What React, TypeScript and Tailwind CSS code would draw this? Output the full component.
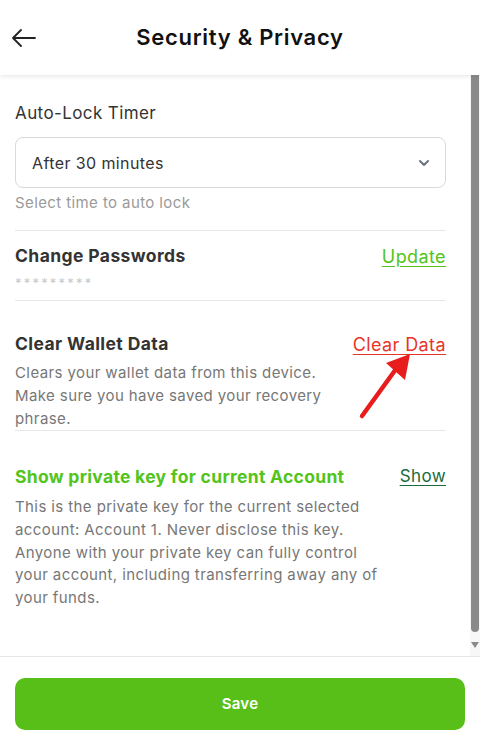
import React from 'react';

const font = { fontFamily: 'Inter, "Noto Sans", sans-serif' };

const Divider = () => <div className="h-px bg-[#e6e6e6]" />;

const App: React.FC = () => {
  return (
    <div className="flex h-[746px] w-[480px] flex-col bg-white text-[#333]" style={font}>
      {/* header */}
      <div className="relative z-10 flex h-[75px] shrink-0 items-center bg-white shadow-[0_2px_4px_rgba(0,0,0,0.08)]">
        <button className="ml-[11px] flex h-[26px] w-[26px] items-center justify-center text-[#222]">
          <svg width="26" height="26" viewBox="0 0 26 26" fill="none" stroke="currentColor" strokeWidth="1.8" strokeLinecap="round" strokeLinejoin="round">
            <path d="M24 13H2M10 5l-8 8 8 8" />
          </svg>
        </button>
        <h1 className="flex-1 pr-[37px] text-center text-[22px] font-semibold tracking-[0.7px] text-[#111]">
          Security &amp; Privacy
        </h1>
      </div>

      {/* scroll area */}
      <div className="relative flex min-h-0 flex-1">
        <div className="flex-1 pl-[15px] pr-[24px] pt-[25px]">
          <div className="text-[17px] leading-[26px] tracking-[0.4px] text-[#333]">Auto-Lock Timer</div>
          <div className="mt-[11px] flex h-[51px] items-center justify-between rounded-[8px] border border-[#d9d9d9] pl-[16px] pr-[14px]">
            <span className="text-[16px] tracking-[0.4px] text-[#333]">After 30 minutes</span>
            <svg width="14" height="14" viewBox="0 0 14 14" fill="none" stroke="#6b7280" strokeWidth="2" strokeLinecap="round" strokeLinejoin="round">
              <path d="M3 5l4 4 4-4" />
            </svg>
          </div>
          <div className="mt-[5px] text-[15px] leading-[20px] tracking-[0.4px] text-[#9a9a9a]">Select time to auto lock</div>
          <div className="mt-[17px]">
            <Divider />
          </div>

          <div className="flex items-center justify-between pt-[12px]">
            <span className="text-[17.5px] font-bold tracking-[0.4px] text-[#333]">Change Passwords</span>
            <a className="text-[18px] tracking-[0.4px] text-[#52c41a] underline underline-offset-[3px]">Update</a>
          </div>
          <div className="mt-[3px] text-[13px] leading-[20px] tracking-[2.2px] text-[#c8c8c8]">*********</div>
          <div className="mt-[7px]">
            <Divider />
          </div>

          <div className="relative flex items-center justify-between pt-[30px]">
            <span className="text-[17.5px] font-bold tracking-[0.4px] text-[#333]">Clear Wallet Data</span>
            <a className="text-[18px] tracking-[0.4px] text-[#e8352a] underline underline-offset-[3px]">Clear Data</a>
          </div>
          <p className="mt-[3px] text-[15px] leading-[23px] tracking-[0.4px] text-[#777]">
            Clears your wallet data from this device.
            <br />
            Make sure you have saved your recovery
            <br />
            phrase.
          </p>
          <div className="mt-0">
            <Divider />
          </div>

          <div className="flex items-center justify-between pt-[33px]">
            <span className="text-[17.5px] font-bold tracking-[0.3px] text-[#52c41a]">Show private key for current Account</span>
            <a className="text-[17px] tracking-[0.4px] text-[#1a6b3c] underline underline-offset-[3px]">Show</a>
          </div>
          <p className="mt-[6px] text-[15px] leading-[22.7px] tracking-[0.4px] text-[#777]">
            This is the private key for the current selected
            <br />
            account: Account 1. Never disclose this key.
            <br />
            Anyone with your private key can fully control
            <br />
            your account, including transferring away any of
            <br />
            your funds.
          </p>
        </div>

        {/* scrollbar */}
        <div className="flex w-[10px] shrink-0 flex-col items-center bg-[#f7f7f7]">
          <div className="w-[8px] flex-1 rounded-b-[4px] bg-[#8a8a8a]" />
          <div className="mb-[8px] mt-[10px] h-0 w-0 border-x-[4px] border-t-[6px] border-x-transparent border-t-[#8a8a8a]" />
        </div>

        {/* annotation arrow */}
        <svg className="pointer-events-none absolute left-0 top-0" width="480" height="582" viewBox="0 75 480 582">
          <path d="M362 416 L396 369" stroke="#e81c1c" strokeWidth="4.5" strokeLinecap="round" />
          <path d="M410 354 L386 363 L405 380 Z" fill="#e81c1c" />
        </svg>
      </div>

      {/* footer */}
      <div className="h-px bg-[#e6e6e6]" />
      <div className="px-[15px] pt-[21px] pb-[16px]">
        <button className="flex h-[52px] w-full items-center justify-center rounded-[10px] bg-[#58bf19] text-[15px] font-semibold tracking-[0.3px] text-white">
          Save
        </button>
      </div>
    </div>
  );
};

export default App;
